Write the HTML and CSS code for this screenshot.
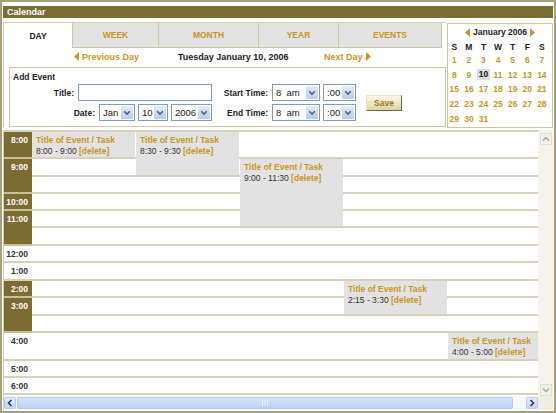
FILE: index.html
```html
<!DOCTYPE html>
<html>
<head>
<meta charset="utf-8">
<link rel="stylesheet" href="styles.css">
</head>
<body>
<div class="frame">
  <div class="hdr">Calendar</div>
  <div class="top">
    <div class="panel">
      <div class="tabs">
        <div class="tab on">DAY</div>
        <div class="tab t-week">WEEK</div>
        <div class="tab t-month">MONTH</div>
        <div class="tab t-year">YEAR</div>
        <div class="tab t-events">EVENTS</div>
      </div>
      <div class="nav">
        <span class="prev"><svg width="5" height="9" viewBox="0 0 5 9"><path d="M5 0V9L0 4.5Z" fill="#c8961e"/></svg>Previous Day</span>
        <span class="cur">Tuesday January 10, 2006</span>
        <span class="next">Next Day<svg width="5" height="9" viewBox="0 0 5 9"><path d="M0 0V9L5 4.5Z" fill="#c8961e"/></svg></span>
      </div>
      <div class="add">
        <div class="add-t">Add Event</div>
        <div class="add-body">
          <div class="fields">
            <div class="frow"><span class="lbl">Title:</span><div class="inp"></div></div>
            <div class="frow mt"><span class="lbl">Date:</span>
              <div class="sel w-jan"><span class="sv">Jan</span><span class="sb"><svg width="12" height="13" viewBox="0 0 12 13"><path d="M3.2 5.2l2.8 2.8 2.8-2.8" fill="none" stroke="#4d6185" stroke-width="1.6"/></svg></span></div>
              <div class="sel w-day"><span class="sv">10</span><span class="sb"><svg width="12" height="13" viewBox="0 0 12 13"><path d="M3.2 5.2l2.8 2.8 2.8-2.8" fill="none" stroke="#4d6185" stroke-width="1.6"/></svg></span></div>
              <div class="sel w-yr"><span class="sv">2006</span><span class="sb"><svg width="12" height="13" viewBox="0 0 12 13"><path d="M3.2 5.2l2.8 2.8 2.8-2.8" fill="none" stroke="#4d6185" stroke-width="1.6"/></svg></span></div>
            </div>
          </div>
          <div class="times">
            <div class="frow"><span class="lbl">Start Time:</span>
              <div class="sel w-hr"><span class="sv">8&nbsp;&nbsp;am</span><span class="sb"><svg width="12" height="13" viewBox="0 0 12 13"><path d="M3.2 5.2l2.8 2.8 2.8-2.8" fill="none" stroke="#4d6185" stroke-width="1.6"/></svg></span></div>
              <div class="sel w-min"><span class="sv">:00</span><span class="sb"><svg width="12" height="13" viewBox="0 0 12 13"><path d="M3.2 5.2l2.8 2.8 2.8-2.8" fill="none" stroke="#4d6185" stroke-width="1.6"/></svg></span></div>
            </div>
            <div class="frow mt"><span class="lbl">End Time:</span>
              <div class="sel w-hr"><span class="sv">8&nbsp;&nbsp;am</span><span class="sb"><svg width="12" height="13" viewBox="0 0 12 13"><path d="M3.2 5.2l2.8 2.8 2.8-2.8" fill="none" stroke="#4d6185" stroke-width="1.6"/></svg></span></div>
              <div class="sel w-min"><span class="sv">:00</span><span class="sb"><svg width="12" height="13" viewBox="0 0 12 13"><path d="M3.2 5.2l2.8 2.8 2.8-2.8" fill="none" stroke="#4d6185" stroke-width="1.6"/></svg></span></div>
            </div>
          </div>
          <div class="save">Save</div>
        </div>
      </div>
    </div>
    <div class="mini">
      <div class="mini-t">
        <svg width="5" height="9" viewBox="0 0 5 9"><path d="M5 0V9L0 4.5Z" fill="#c8961e"/></svg>
        <span>January 2006</span>
        <svg width="5" height="9" viewBox="0 0 5 9"><path d="M0 0V9L5 4.5Z" fill="#c8961e"/></svg>
      </div>
      <div class="mini-h">
        <span>S</span><span>M</span><span>T</span><span>W</span><span>T</span><span>F</span><span>S</span>
      </div>
      <div class="mini-g">
        <span>1</span><span>2</span><span>3</span><span>4</span><span>5</span><span>6</span><span>7</span>
        <span>8</span><span>9</span><span><i class="td">10</i></span><span>11</span><span>12</span><span>13</span><span>14</span>
        <span>15</span><span>16</span><span>17</span><span>18</span><span>19</span><span>20</span><span>21</span>
        <span>22</span><span>23</span><span>24</span><span>25</span><span>26</span><span>27</span><span>28</span>
        <span>29</span><span>30</span><span>31</span>
      </div>
    </div>
  </div>
  <div class="sched">
    <div class="sc-main">
      <div class="vp">
        <div class="grid">
          <div class="ln ra1"></div><div class="ln ra2"></div><div class="ln ra3"></div><div class="ln ra4"></div><div class="ln ra5"></div>
          <div class="ln ra6"></div><div class="ln ra7"></div><div class="ln ra8"></div><div class="ln ra9"></div><div class="ln ra10"></div>
          <div class="ln ra11"></div><div class="ln ra12"></div><div class="ln ra13"></div><div class="ln ra14"></div><div class="ln ra15"></div>

          <div class="tc ol tm8">8:00</div>
          <div class="tc ol tm9">9:00</div>
          <div class="tc ol tm10">10:00</div>
          <div class="tc ol tm11">11:00</div>
          <div class="tc tm12">12:00</div>
          <div class="tc tm1">1:00</div>
          <div class="tc ol tm2">2:00</div>
          <div class="tc ol tm3">3:00</div>
          <div class="tc tm4">4:00</div>
          <div class="tc tm5">5:00</div>
          <div class="tc tm6">6:00</div>
          <div class="tc tm7"></div>

          <div class="ev e1"><div class="et">Title of Event / Task</div><div>8:00 - 9:00 <b class="del">[delete]</b></div></div>
          <div class="ev e2"><div class="et">Title of Event / Task</div><div>8:30 - 9:30 <b class="del">[delete]</b></div></div>
          <div class="ev e3"><div class="et">Title of Event / Task</div><div>9:00 - 11:30 <b class="del">[delete]</b></div></div>
          <div class="ev e4"><div class="et">Title of Event / Task</div><div>2:15 - 3:30 <b class="del">[delete]</b></div></div>
          <div class="ev e5"><div class="et">Title of Event / Task</div><div>4:00 - 5:00 <b class="del">[delete]</b></div></div>
        </div>
      </div>
      <div class="vs">
        <div class="vbtn"><svg width="12" height="12" viewBox="0 0 12 12"><path d="M3 7.5l3-3 3 3" fill="none" stroke="#aaa99a" stroke-width="1.5"/></svg></div>
        <div class="vbtn"><svg width="12" height="12" viewBox="0 0 12 12"><path d="M3 4.5l3 3 3-3" fill="none" stroke="#aaa99a" stroke-width="1.5"/></svg></div>
      </div>
    </div>
    <div class="sc-bot">
      <div class="hs">
        <div class="hbtn hl"><svg width="12" height="12" viewBox="0 0 12 12"><path d="M7.5 3L4.5 6l3 3" fill="none" stroke="#1f3470" stroke-width="1.6"/></svg></div>
        <div class="thumb"><svg width="8" height="6" viewBox="0 0 8 6"><path d="M1.5 0v6M4 0v6M6.5 0v6" stroke="#eef3fe" stroke-width="1"/></svg></div>
        <div class="hbtn hr"><svg width="12" height="12" viewBox="0 0 12 12"><path d="M4.5 3l3 3-3 3" fill="none" stroke="#1f3470" stroke-width="1.6"/></svg></div>
      </div>
      <div class="corner"></div>
    </div>
  </div>
</div>
</body>
</html>
```

FILE: styles.css
```css
html, body {
  margin: 0;
  padding: 0;
  background: #fff;
}
body {
  font-family: "Liberation Sans", Arial, sans-serif;
  color: #222;
}
.frame {
  width: 556px;
  height: 413px;
  box-sizing: border-box;
  border: 2px solid #a8a076;
  padding: 4px 1px 1px 1px;
  display: flex;
  flex-direction: column;
  background: #fff;
}
.hdr {
  height: 12px;
  line-height: 12px;
  background: #7b6e34;
  color: #fff;
  font-weight: bold;
  font-size: 9px;
  padding-left: 4px;
}
.top {
  display: flex;
  height: 112px;
}
.panel {
  width: 443px;
  box-sizing: border-box;
  margin-top: 4px;
  height: 105px;
  border-left: 1px solid #d6cfb2;
  border-top: 1px solid #d6cfb2;
}
.tabs {
  display: flex;
  height: 25px;
}
.tab {
  box-sizing: border-box;
  height: 25px;
  display: flex;
  align-items: center;
  justify-content: center;
  font-weight: bold;
  font-size: 8.5px;
  color: #c8961e;
  background: #e3e3e3;
  border-left: 1px solid #cdc5a5;
  border-bottom: 1px solid #cdc5a5;
}
.tab.on {
  width: 68px;
  background: #fff;
  color: #222;
  border: none;
}
.t-week { width: 86px; }
.t-month { width: 100px; }
.t-year { width: 80px; }
.t-events { width: 104px; border-right: 1px solid #cdc5a5; }

.nav {
  height: 17px;
  margin-bottom: 2px;
  display: flex;
  align-items: center;
  padding-left: 70px;
  font-weight: bold;
  font-size: 9px;
}
.prev {
  width: 104px;
  color: #c8961e;
  display: flex;
  align-items: center;
  gap: 3px;
}
.cur {
  width: 146px;
  color: #222;
}
.next {
  color: #c8961e;
  display: flex;
  align-items: center;
  gap: 3px;
}
.add {
  margin-left: 5px;
  box-sizing: border-box;
  width: 437px;
  height: 60px;
  border: 1px solid #cdc5a5;
}
.add-t {
  padding: 3px 0 1px 3px;
  line-height: 12px;
  font-weight: bold;
  font-size: 8.5px;
}
.add-body {
  display: flex;
  align-items: center;
}
.fields {
  width: 202px;
}
.times {
  width: 144px;
}
.frow {
  display: flex;
  justify-content: flex-end;
  align-items: center;
  height: 17px;
  gap: 3px;
}
.frow.mt { margin-top: 3px; }
.lbl {
  font-weight: bold;
  font-size: 8.5px;
  margin-right: 1px;
}
.inp {
  width: 134px;
  height: 17px;
  box-sizing: border-box;
  border: 1px solid #7f9db9;
  background: #fff;
}
.sel {
  height: 17px;
  box-sizing: border-box;
  border: 1px solid #7f9db9;
  background: #fff;
  display: flex;
  align-items: center;
  justify-content: space-between;
  padding: 1px;
}
.sv {
  font-size: 9.5px;
  padding-left: 2px;
  color: #222;
}
.sb {
  width: 12px;
  height: 13px;
  display: flex;
  background: linear-gradient(#e4ecfd, #b7cbf6);
  border-radius: 1px;
}
.w-jan { width: 36px; }
.w-day { width: 30px; }
.w-yr { width: 41px; }
.w-hr { width: 48px; }
.w-min { width: 33px; }
.save {
  margin-left: 10px;
  width: 36px;
  height: 16px;
  box-sizing: border-box;
  border: 1px solid #e8e2c4;
  border-right-color: #6e6444;
  border-bottom-color: #6e6444;
  background: linear-gradient(#fbf8e6, #ddd3a2);
  display: flex;
  align-items: center;
  justify-content: center;
  font-weight: bold;
  font-size: 8.5px;
  color: #9c7c22;
}

.mini {
  margin-top: 5px;
  margin-left: 1px;
  width: 106px;
  height: 105px;
  box-sizing: border-box;
  border: 1px solid #cdc5a5;
}
.mini-t {
  height: 16px;
  display: flex;
  align-items: center;
  justify-content: center;
  gap: 3px;
  font-weight: bold;
  font-size: 8.5px;
}
.mini-h, .mini-g {
  display: grid;
  grid-template-columns: repeat(7, 14.6px);
  margin-left: -1px;
  font-weight: bold;
  font-size: 8.5px;
}
.mini-h {
  grid-auto-rows: 13px;
}
.mini-g {
  grid-auto-rows: 14.6px;
  color: #c8961e;
}
.mini-h span, .mini-g span {
  display: flex;
  align-items: center;
  justify-content: center;
}
.td {
  font-style: normal;
  display: inline-block;
  width: 13px;
  height: 11px;
  line-height: 11px;
  text-align: center;
  background: #dedede;
  color: #111;
}

.sched {
  border-left: 1px solid #d6cfb2;
  display: flex;
  flex-direction: column;
}
.sc-main {
  display: flex;
  height: 266px;
}
.vp {
  width: 534px;
  height: 266px;
  overflow: hidden;
}
.grid {
  width: 548px;
  border-top: 2px solid #d8d0b8;
  display: grid;
  grid-template-columns: 28px repeat(5, 104px);
  grid-template-rows: 27px 18px 17px 17px 17px 18px 17px 18px 17px 18px 17px 28px 17px 17px 17px;
}
.ln {
  grid-column: 2 / -1;
  box-sizing: border-box;
  border-bottom: 2px solid #d8d0b8;
}
.ra1 { grid-row: 1; } .ra2 { grid-row: 2; } .ra3 { grid-row: 3; } .ra4 { grid-row: 4; } .ra5 { grid-row: 5; }
.ra6 { grid-row: 6; } .ra7 { grid-row: 7; } .ra8 { grid-row: 8; } .ra9 { grid-row: 9; } .ra10 { grid-row: 10; }
.ra11 { grid-row: 11; } .ra12 { grid-row: 12; } .ra13 { grid-row: 13; } .ra14 { grid-row: 14; } .ra15 { grid-row: 15; }
.tc {
  grid-column: 1;
  box-sizing: border-box;
  border-bottom: 2px solid #d8d0b8;
  text-align: right;
  padding: 3px 4px 0 0;
  font-weight: bold;
  font-size: 8.5px;
  line-height: 11px;
  color: #333;
  background: #fff;
}
.tc.ol {
  background: #7b6d31;
  color: #fff;
  border-bottom-color: #c9bf98;
}
.tm8 { grid-row: 1; }
.tm9 { grid-row: 2 / 4; }
.tm10 { grid-row: 4; }
.tm11 { grid-row: 5 / 7; }
.tm12 { grid-row: 7; }
.tm1 { grid-row: 8; }
.tm2 { grid-row: 9; }
.tm3 { grid-row: 10 / 12; }
.tm4 { grid-row: 12; }
.tm5 { grid-row: 13; }
.tm6 { grid-row: 14; }
.tm7 { grid-row: 15; }
.ev {
  background: #e2e2e2;
  margin: 0 1px 2px 0;
  padding: 3px 4px 0;
  font-size: 8.5px;
  line-height: 11px;
  color: #333;
  overflow: hidden;
  white-space: nowrap;
}
.et {
  font-weight: bold;
  color: #c8961e;
}
.del {
  color: #c8961e;
}
.e1 { grid-column: 2; grid-row: 1 / 2; }
.e2 { grid-column: 3; grid-row: 1 / 3; }
.e3 { grid-column: 4; grid-row: 2 / 6; }
.e4 { grid-column: 5; grid-row: 9 / 11; }
.e5 { grid-column: 6; grid-row: 12 / 13; }

.vs {
  width: 15px;
  height: 266px;
  box-sizing: border-box;
  background: #f5f3eb;
  padding: 3px 1px 0 2px;
  display: flex;
  flex-direction: column;
  justify-content: space-between;
}
.vbtn {
  width: 12px;
  height: 12px;
  box-sizing: border-box;
  border: 1px solid #e2dfd0;
  background: #f3f1e6;
  display: flex;
}
.vbtn svg { margin: -1px; }
.sc-bot {
  display: flex;
  height: 14px;
}
.hs {
  width: 534px;
  height: 14px;
  box-sizing: border-box;
  padding: 1px 0;
  display: flex;
  background: #f7f7f5;
}
.hbtn {
  width: 12px;
  height: 12px;
  box-sizing: border-box;
  border: 1px solid #b6c9f4;
  background: linear-gradient(#e6eefd, #c2d4fa);
  border-radius: 2px;
  display: flex;
}
.hbtn svg { margin: -1px; }
.thumb {
  width: 496px;
  margin-left: 1px;
  height: 12px;
  box-sizing: border-box;
  border: 1px solid #b2c7f4;
  border-radius: 2px;
  background: linear-gradient(#d4e2fd, #bcd0f9);
  display: flex;
  align-items: center;
  justify-content: center;
}
.hr {
  margin-left: auto;
}
.corner {
  width: 15px;
  height: 14px;
  background: #f0eee2;
}
```
